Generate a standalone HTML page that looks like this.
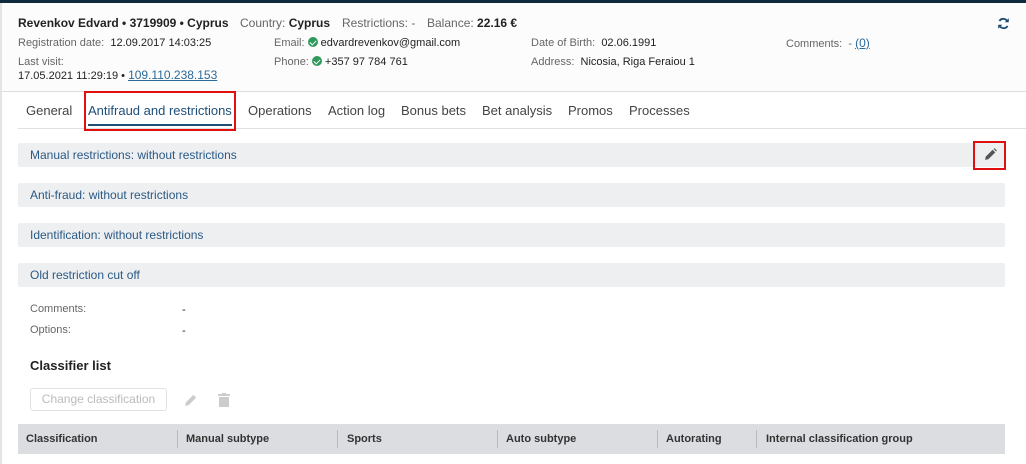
<!DOCTYPE html>
<html><head><style>
*{box-sizing:border-box;margin:0;padding:0}
body{width:1026px;height:464px;overflow:hidden;background:#fff;font-family:"Liberation Sans",sans-serif;position:relative;color:#222}
.a{position:absolute;white-space:nowrap}
.top{left:0;top:0;width:1026px;height:3px;background:#0f2a3d}
.lb{left:0;top:3px;width:2px;height:461px;background:#e4e4e4}
.hdr{left:2px;top:3px;width:1024px;height:89px;background:#fcfcfd;border-bottom:1px solid #dedede}
.g{color:#666;font-size:11px}
.v{color:#222;font-size:11px}
.lnk{color:#2a6a9a;text-decoration:underline}
.tab{font-size:13px;color:#444;top:103px}
.sec{left:18px;width:987px;height:24px;background:#eeeff1;border-radius:2px;color:#2a5a85;font-size:12px;line-height:24px;padding-left:12px}
.chk{display:inline-block;width:10px;height:10px;border-radius:50%;background:#2e9a5a;vertical-align:-1px;position:relative;margin-right:3px}
.chk:after{content:"";position:absolute;left:3px;top:1.5px;width:3px;height:5px;border:solid #fff;border-width:0 1.5px 1.5px 0;transform:rotate(45deg)}
.th{top:424px;height:30px;background:#dcdde1;font-size:11px;font-weight:bold;color:#333;line-height:30px}
.sep{position:absolute;top:6px;width:1px;height:18px;background:#bbb}
</style></head><body>
<div class="a top"></div><div class="a lb"></div>
<div class="a hdr"></div>
<div class="a" style="left:18px;top:16px;font-size:12px;font-weight:bold">Revenkov Edvard • 3719909 • Cyprus</div>
<div class="a" style="left:240px;top:16px;font-size:12px;color:#666">Country: <b style="color:#222">Cyprus</b></div>
<div class="a" style="left:342px;top:16px;font-size:12px;color:#666">Restrictions: -</div>
<div class="a" style="left:427px;top:16px;font-size:12px;color:#666">Balance: <b style="color:#222">22.16 €</b></div>
<div class="a g" style="left:18px;top:37px">Registration date: &nbsp;<span class="v">12.09.2017 14:03:25</span></div>
<div class="a g" style="left:18px;top:56px">Last visit:</div>
<div class="a v" style="left:18px;top:68px">17.05.2021 11:29:19 • <span class="lnk" style="font-size:12px">109.110.238.153</span></div>
<div class="a g" style="left:274px;top:37px">Email: <span class="chk"></span><span class="v">edvardrevenkov@gmail.com</span></div>
<div class="a g" style="left:274px;top:56px">Phone: <span class="chk"></span><span class="v">+357 97 784 761</span></div>
<div class="a g" style="left:531px;top:37px">Date of Birth: &nbsp;<span class="v">02.06.1991</span></div>
<div class="a g" style="left:531px;top:56px">Address: &nbsp;<span class="v">Nicosia, Riga Feraiou 1</span></div>
<div class="a g" style="left:786px;top:36px">Comments: &nbsp;- <span class="lnk" style="font-size:12px">(0)</span></div>
<svg class="a" style="left:997px;top:17px" width="13" height="13" viewBox="0 0 16 16"><path d="M13 6A5.5 5.5 0 0 0 3 5M3 10a5.5 5.5 0 0 0 10 1" fill="none" stroke="#1d4a6e" stroke-width="2.2"/><path d="M14.5 1.5v5h-5zM1.5 14.5v-5h5z" fill="#1d4a6e"/></svg>
<div class="a" style="left:18px;top:128px;width:1008px;height:1px;background:#e0e0e0"></div>
<div class="a tab" style="left:26px">General</div>
<div class="a tab" style="left:88px;color:#1f4e79">Antifraud and restrictions</div>
<div class="a" style="left:88px;top:124px;width:144px;height:2px;background:#1f4e79"></div>
<div class="a" style="left:84px;top:91px;width:152px;height:40px;border:2px solid #e01010"></div>
<div class="a tab" style="left:248px">Operations</div>
<div class="a tab" style="left:328px">Action log</div>
<div class="a tab" style="left:401px">Bonus bets</div>
<div class="a tab" style="left:482px">Bet analysis</div>
<div class="a tab" style="left:568px">Promos</div>
<div class="a tab" style="left:629px">Processes</div>
<div class="a sec" style="top:143px">Manual restrictions: without restrictions</div>
<div class="a" style="left:973px;top:141px;width:33px;height:29px;border:2px solid #e01010"></div>
<svg class="a" style="left:984px;top:148px" width="13" height="13" viewBox="0 0 12 12"><path d="M1 11l.6-3L8 1.6 10.4 4 4 10.4z" fill="#555"/><path d="M8.8.8l1-.6 2 2-.6 1z" fill="#555"/></svg>
<div class="a sec" style="top:183px">Anti-fraud: without restrictions</div>
<div class="a sec" style="top:223px">Identification: without restrictions</div>
<div class="a sec" style="top:263px">Old restriction cut off</div>
<div class="a g" style="left:30px;top:303px">Comments:</div><div class="a v" style="left:182px;top:304px">-</div>
<div class="a g" style="left:30px;top:324px">Options:</div><div class="a v" style="left:182px;top:325px">-</div>
<div class="a" style="left:30px;top:358px;font-size:13px;font-weight:bold">Classifier list</div>
<div class="a" style="left:30px;top:388px;width:137px;height:23px;border:1px solid #e2e2e2;border-radius:3px;color:#bbb;font-size:12px;line-height:21px;text-align:center">Change classification</div>
<svg class="a" style="left:184px;top:393px" width="14" height="14" viewBox="0 0 12 12"><path d="M1 11l.6-3L8 1.6 10.4 4 4 10.4z" fill="#ccc"/></svg>
<svg class="a" style="left:218px;top:393px" width="12" height="14" viewBox="0 0 12 14"><rect x="0" y="1" width="12" height="2" fill="#ccc"/><rect x="4" y="0" width="4" height="2" fill="#ccc"/><rect x="1" y="4" width="10" height="10" fill="#ccc"/></svg>
<div class="a th" style="left:18px;width:987px">
<span class="a" style="left:8px">Classification</span>
<div class="sep" style="left:159px"></div><span class="a" style="left:168px">Manual subtype</span>
<div class="sep" style="left:319px"></div><span class="a" style="left:329px">Sports</span>
<div class="sep" style="left:479px"></div><span class="a" style="left:488px">Auto subtype</span>
<div class="sep" style="left:639px"></div><span class="a" style="left:648px">Autorating</span>
<div class="sep" style="left:738px"></div><span class="a" style="left:748px">Internal classification group</span>
</div>
</body></html>
